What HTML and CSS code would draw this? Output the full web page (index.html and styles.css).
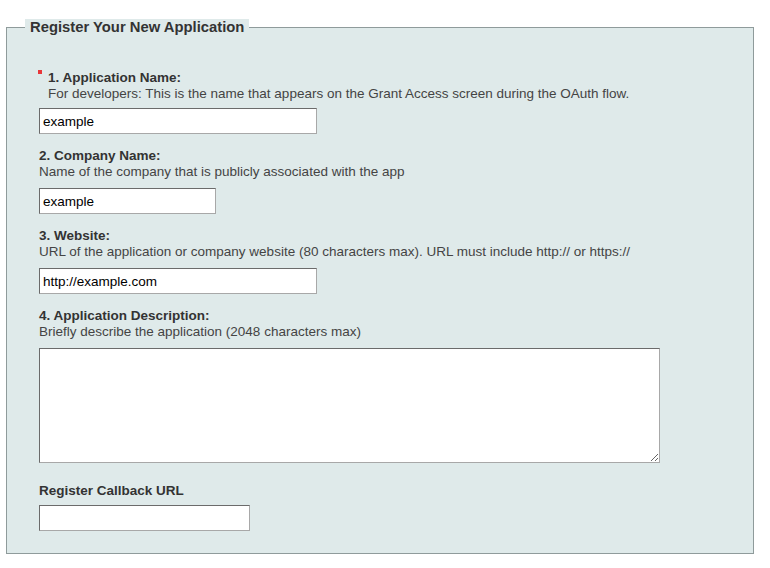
FILE: index.html
```html
<!DOCTYPE html>
<html lang="en">
<head>
  <meta charset="UTF-8">
  <meta name="viewport" content="width=device-width, initial-scale=1.0">
  <title>Register Your New Application</title>
  <link rel="stylesheet" href="styles.css">
</head>
<body>
  <div class="page">
    <fieldset class="register">
      <legend>Register Your New Application</legend>

      <div class="field field-required">
        <label class="field-label" for="app-name"><span class="req"></span>1. Application Name:</label>
        <p class="field-help">For developers: This is the name that appears on the Grant Access screen during the OAuth flow.</p>
        <input type="text" id="app-name" class="text-input input-wide" value="example">
      </div>

      <div class="field">
        <label class="field-label" for="company-name">2. Company Name:</label>
        <p class="field-help">Name of the company that is publicly associated with the app</p>
        <input type="text" id="company-name" class="text-input input-short" value="example">
      </div>

      <div class="field">
        <label class="field-label" for="website">3. Website:</label>
        <p class="field-help">URL of the application or company website (80 characters max). URL must include http:// or https://</p>
        <input type="text" id="website" class="text-input input-wide" value="http://example.com">
      </div>

      <div class="field">
        <label class="field-label" for="description">4. Application Description:</label>
        <p class="field-help">Briefly describe the application (2048 characters max)</p>
        <textarea id="description" class="text-area"></textarea>
      </div>

      <div class="field field-callback">
        <label class="field-label" for="callback">Register Callback URL</label>
        <input type="text" id="callback" class="text-input input-callback" value="">
      </div>
    </fieldset>
  </div>
</body>
</html>
```

FILE: styles.css
```css
body {
  margin: 0;
  background-color: #fff;
  font-family: "Liberation Sans", Arial, sans-serif;
  font-size: 13.5px;
  color: #333;
}

.page {
  padding: 19px 16px 0 6px;
}

.register {
  margin: 0;
  padding: 34px 18px 22px;
  border: 1px solid #8f9b9b;
  background-color: #dfeaea;
}

.register legend {
  padding: 0 5px;
  font-size: 14.8px;
  font-weight: bold;
  line-height: 16px;
  background-color: #dfeaea;
}

.field {
  margin-left: 14px;
}

.field + .field {
  margin-top: 14px;
}

.field-label {
  display: block;
  font-weight: bold;
  line-height: 16px;
}

.field-help {
  margin: 0;
  line-height: 16px;
  color: #444;
}

/* required marker */
.field-required .field-label,
.field-required .field-help {
  padding-left: 9px;
}

.field-required .field-label {
  line-height: 17px;
}

.req {
  display: inline-block;
  width: 4px;
  height: 4px;
  margin: 1px 6px 0 -10px;
  vertical-align: top;
  background-color: #e8373a;
}

.text-input,
.text-area {
  display: block;
  box-sizing: border-box;
  margin: 8px 0 0;
  border: 1px solid;
  border-color: #6b6b6b #a8a8a8 #a8a8a8 #6b6b6b;
  border-radius: 0;
  background-color: #fff;
  font-family: "Liberation Sans", Arial, sans-serif;
  font-size: 13.5px;
  color: #000;
}

.text-input {
  height: 26px;
  padding: 0 3px;
}

.field-required .text-input {
  margin-top: 6px;
}

.input-wide {
  width: 278px;
}

.input-short {
  width: 177px;
}

.input-callback {
  width: 211px;
  margin-top: 6px;
}

.text-area {
  width: 621px;
  height: 115px;
  padding: 2px 3px;
}

.field-callback {
  margin-top: 20px !important;
}
```
